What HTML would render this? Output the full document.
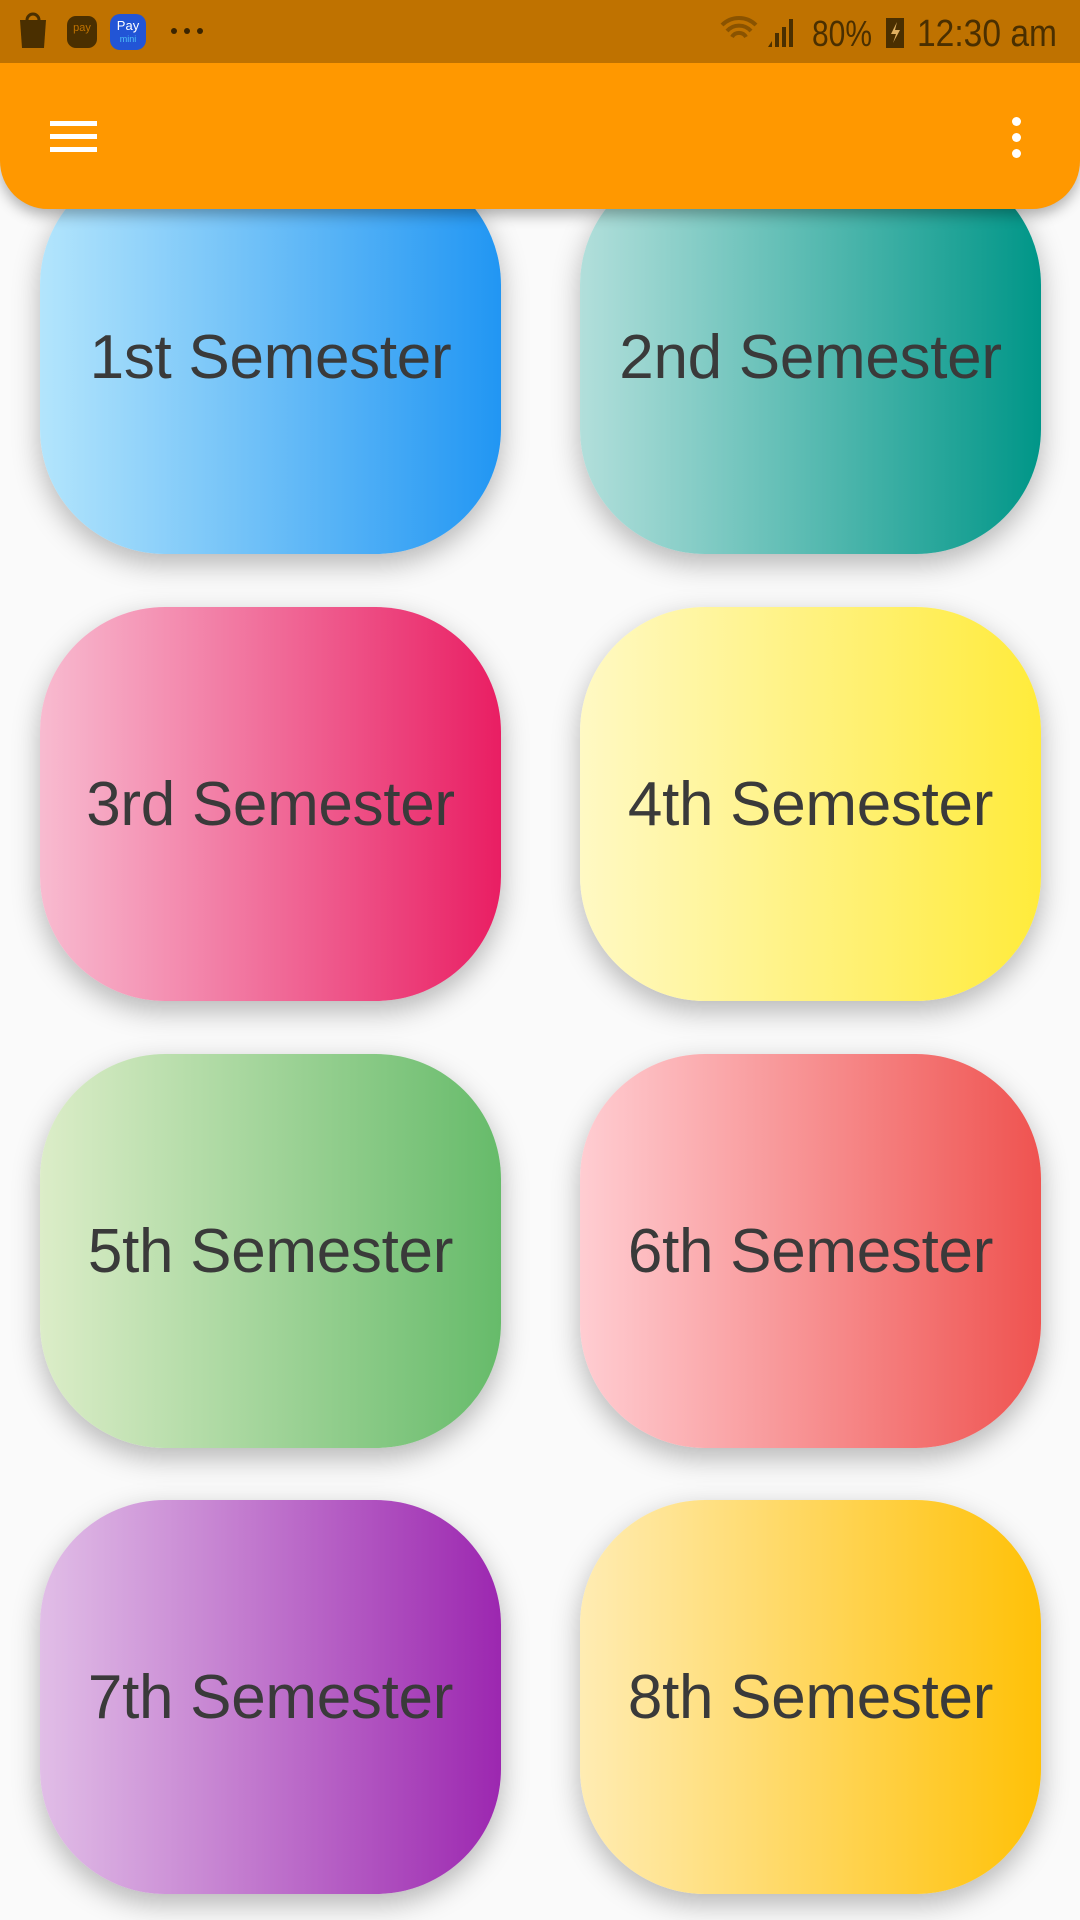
<!DOCTYPE html>
<html><head><meta charset="utf-8"><style>
*{margin:0;padding:0;box-sizing:border-box}
body{width:1080px;height:1920px;background:#fafafa;position:relative;overflow:hidden;font-family:"Liberation Sans",sans-serif}
.sb{position:absolute;left:0;top:0;width:1080px;height:63px;background:#bf7200;z-index:3}
.tb{position:absolute;left:0;top:63px;width:1080px;height:146px;background:#ff9800;border-radius:0 0 48px 48px;z-index:2;box-shadow:0 6px 14px rgba(0,0,0,.3)}
.card{position:absolute;width:461px;height:394px;border-radius:125px;box-shadow:0 10px 28px rgba(0,0,0,.28);display:flex;align-items:center;justify-content:center;font-size:62px;font-weight:300;color:#3a3a3a;letter-spacing:-.3px}
.l{left:40px}.r{left:580px}
</style></head><body>
<div class="sb">
 <svg width="1080" height="63" style="position:absolute;left:0;top:0">
  <path d="M20 20h26l-2 28h-22z" fill="#4a2f00"/><path d="M27 20a6 6 0 0 1 12 0" stroke="#4a2f00" stroke-width="3" fill="none"/>
  <rect x="67" y="16" width="30" height="32" rx="9" fill="#4a2f00"/>
  <text x="82" y="31" font-size="11" fill="#bf7200" text-anchor="middle" font-family="Liberation Sans">pay</text>
  <rect x="110" y="14" width="36" height="36" rx="10" fill="#2255d6"/>
  <text x="128" y="30" font-size="13" fill="#fff" text-anchor="middle" font-family="Liberation Sans">Pay</text>
  <text x="128" y="42" font-size="9" fill="#4fc3f7" text-anchor="middle" font-family="Liberation Sans">mini</text>
  <circle cx="174" cy="31" r="3" fill="#3a2400"/><circle cx="187" cy="31" r="3" fill="#3a2400"/><circle cx="200" cy="31" r="3" fill="#3a2400"/>
  <path d="M722 25a24 24 0 0 1 34 0M727 31a16 16 0 0 1 24 0M732 37a8 8 0 0 1 14 0" stroke="#8a5300" stroke-width="4" fill="none"/>
  <path d="M768 47h4v-6zM775 47h4v-14h-4zM782 47h4v-20h-4zM789 47h4v-28h-4z" fill="#4a2f00"/>
  <text x="812" y="46" font-size="36" fill="#4a2f00" font-family="Liberation Sans" textLength="60" lengthAdjust="spacingAndGlyphs">80%</text>
  <rect x="886" y="18" width="18" height="30" fill="#4a2f00"/><path d="M897 22l-6 12h5l-3 9 7-13h-5z" fill="#e0b060"/>
  <text x="917" y="46" font-size="38" fill="#4a2f00" font-family="Liberation Sans" textLength="140" lengthAdjust="spacingAndGlyphs">12:30 am</text>
 </svg>
</div>
<div class="tb">
 <div style="position:absolute;left:50px;top:58px;width:47px;height:5px;background:#fff"></div>
 <div style="position:absolute;left:50px;top:71px;width:47px;height:5px;background:#fff"></div>
 <div style="position:absolute;left:50px;top:84px;width:47px;height:5px;background:#fff"></div>
 <div style="position:absolute;left:1012px;top:54px;width:9px;height:9px;border-radius:50%;background:#fff"></div>
 <div style="position:absolute;left:1012px;top:70px;width:9px;height:9px;border-radius:50%;background:#fff"></div>
 <div style="position:absolute;left:1012px;top:86px;width:9px;height:9px;border-radius:50%;background:#fff"></div>
</div>
<div class="card l" style="top:160px;background:linear-gradient(90deg,#b3e5fc,#2196f3)">1st Semester</div>
<div class="card r" style="top:160px;background:linear-gradient(90deg,#b2dfdb,#009688)">2nd Semester</div>
<div class="card l" style="top:607px;background:linear-gradient(90deg,#f8bbd0,#e91e63)">3rd Semester</div>
<div class="card r" style="top:607px;background:linear-gradient(90deg,#fff9c4,#ffeb3b)">4th Semester</div>
<div class="card l" style="top:1054px;background:linear-gradient(90deg,#dcedc8,#66bb6a)">5th Semester</div>
<div class="card r" style="top:1054px;background:linear-gradient(90deg,#ffcdd2,#ef5350)">6th Semester</div>
<div class="card l" style="top:1500px;background:linear-gradient(90deg,#e1bee7,#9c27b0)">7th Semester</div>
<div class="card r" style="top:1500px;background:linear-gradient(90deg,#ffecb3,#ffc107)">8th Semester</div>
</body></html>
